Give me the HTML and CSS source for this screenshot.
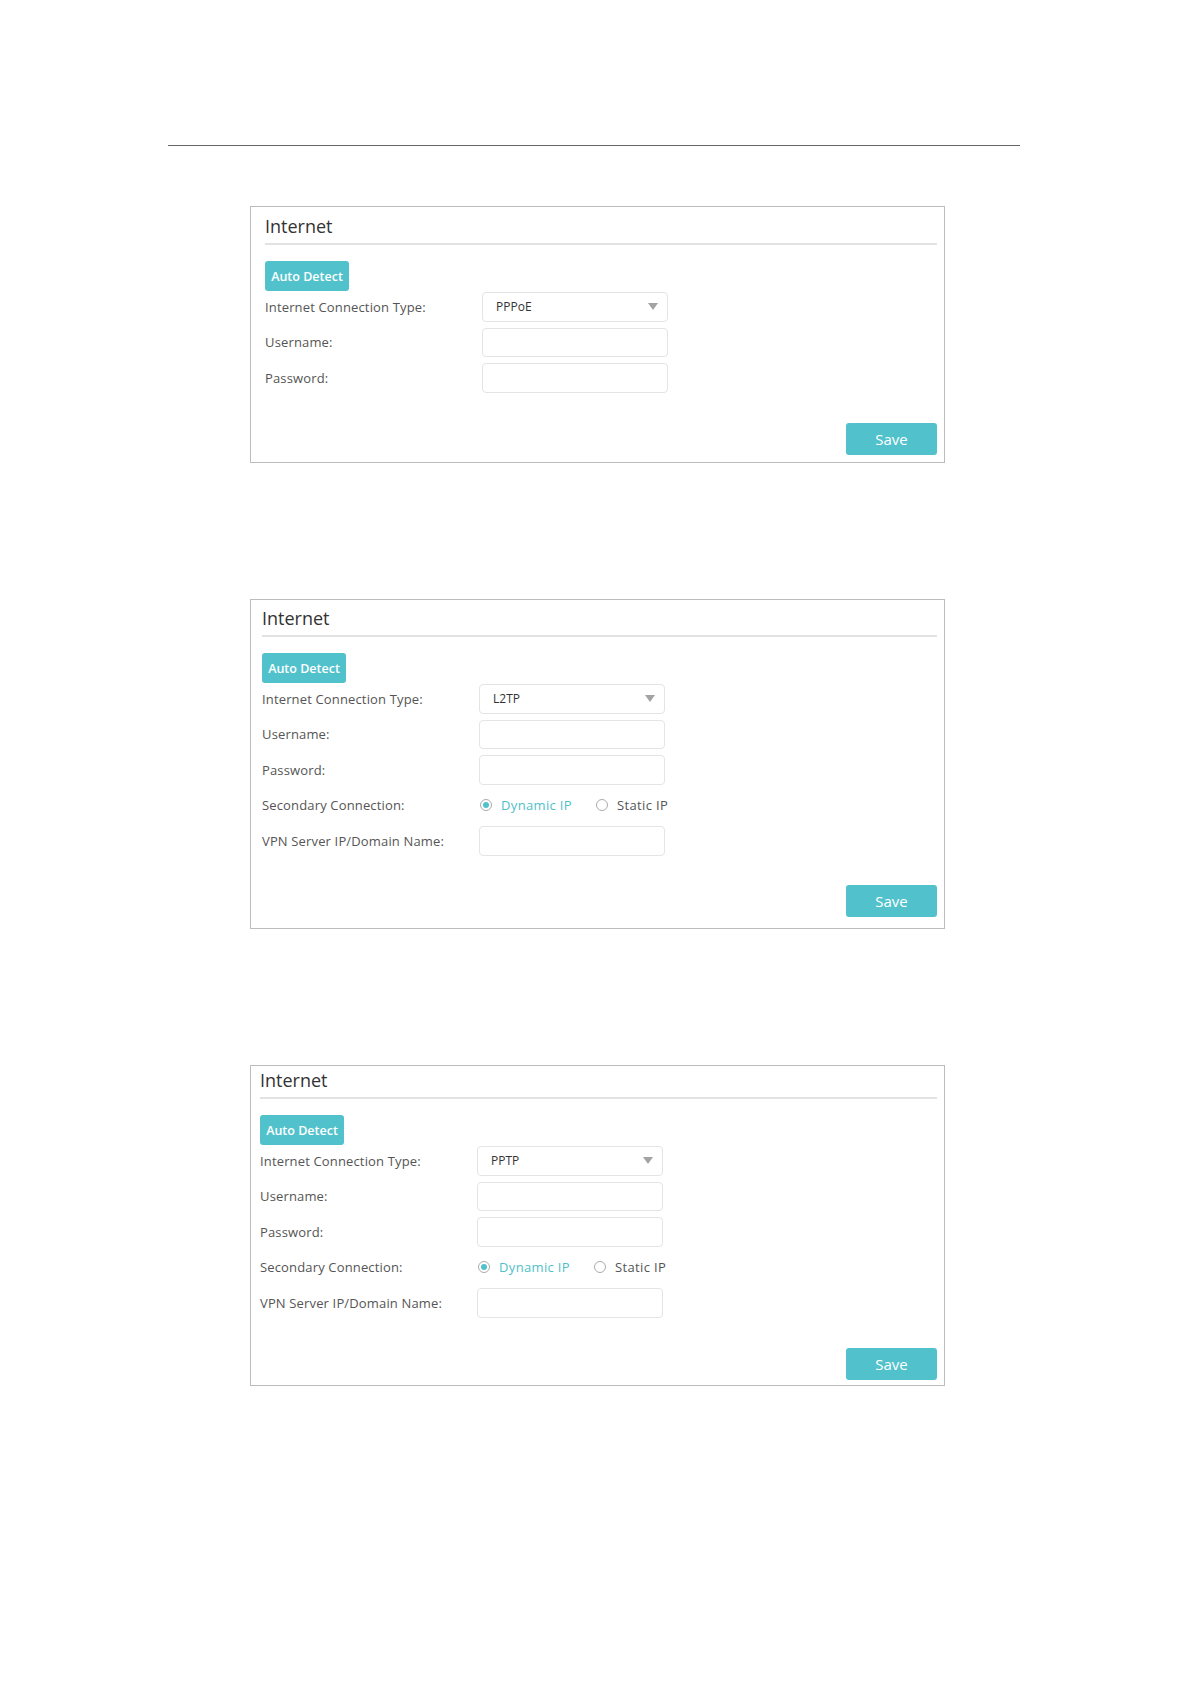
FILE: index.html
```html
<!DOCTYPE html>
<html>
  <head>
    <meta charset="utf-8">
    <title>Internet settings</title>
    <link rel="stylesheet" href="styles.css">
  </head>
  <body>
    <hr class="rule">

    <!-- PPPoE -->
    <section class="card card-pppoe">
      <h2 class="card-title">Internet</h2>
      <button type="button" class="btn-detect">Auto Detect</button>
      <div class="row">
        <span class="row-label">Internet Connection Type:</span>
        <div class="select">
          <span>PPPoE</span>
          <svg class="select-arrow" width="10" height="7" viewBox="0 0 10 7"><path d="M0 0H10L5 7Z" fill="#a3a3a3"/></svg>
        </div>
      </div>
      <div class="row">
        <span class="row-label">Username:</span>
        <input class="field" type="text">
      </div>
      <div class="row">
        <span class="row-label">Password:</span>
        <input class="field" type="password">
      </div>
      <div class="actions">
        <button type="button" class="btn-save">Save</button>
      </div>
    </section>

    <!-- L2TP -->
    <section class="card card-l2tp">
      <h2 class="card-title">Internet</h2>
      <button type="button" class="btn-detect">Auto Detect</button>
      <div class="row">
        <span class="row-label">Internet Connection Type:</span>
        <div class="select">
          <span>L2TP</span>
          <svg class="select-arrow" width="10" height="7" viewBox="0 0 10 7"><path d="M0 0H10L5 7Z" fill="#a3a3a3"/></svg>
        </div>
      </div>
      <div class="row">
        <span class="row-label">Username:</span>
        <input class="field" type="text">
      </div>
      <div class="row">
        <span class="row-label">Password:</span>
        <input class="field" type="password">
      </div>
      <div class="row">
        <span class="row-label">Secondary Connection:</span>
        <div class="radios">
          <label class="radio is-checked"><span class="radio-mark"></span>Dynamic IP</label>
          <label class="radio"><span class="radio-mark"></span>Static IP</label>
        </div>
      </div>
      <div class="row">
        <span class="row-label">VPN Server IP/Domain Name:</span>
        <input class="field" type="text">
      </div>
      <div class="actions">
        <button type="button" class="btn-save">Save</button>
      </div>
    </section>

    <!-- PPTP -->
    <section class="card card-pptp">
      <h2 class="card-title">Internet</h2>
      <button type="button" class="btn-detect">Auto Detect</button>
      <div class="row">
        <span class="row-label">Internet Connection Type:</span>
        <div class="select">
          <span>PPTP</span>
          <svg class="select-arrow" width="10" height="7" viewBox="0 0 10 7"><path d="M0 0H10L5 7Z" fill="#a3a3a3"/></svg>
        </div>
      </div>
      <div class="row">
        <span class="row-label">Username:</span>
        <input class="field" type="text">
      </div>
      <div class="row">
        <span class="row-label">Password:</span>
        <input class="field" type="password">
      </div>
      <div class="row">
        <span class="row-label">Secondary Connection:</span>
        <div class="radios">
          <label class="radio is-checked"><span class="radio-mark"></span>Dynamic IP</label>
          <label class="radio"><span class="radio-mark"></span>Static IP</label>
        </div>
      </div>
      <div class="row">
        <span class="row-label">VPN Server IP/Domain Name:</span>
        <input class="field" type="text">
      </div>
      <div class="actions">
        <button type="button" class="btn-save">Save</button>
      </div>
    </section>
  </body>
</html>
```

FILE: styles.css
```css
* {
  margin: 0;
  padding: 0;
  box-sizing: border-box;
}
body {
  font-family: "Open Sans", "Liberation Sans", sans-serif;
  font-size: 13px;
  color: #555;
  background: #fff;
  padding-bottom: 296px;
}
.rule {
  border: 0;
  border-top: 1px solid #666;
  margin: 145px 170px 0 168px;
}
.card {
  width: 695px;
  margin-left: 250px;
  border: 1px solid #bcbcbc;
  padding-right: 7px;
}
.card-pppoe {
  margin-top: 60px;
  padding: 7px 7px 7.5px 14px;
}
.card-l2tp {
  margin-top: 136px;
  padding: 6px 7px 11px 11px;
}
.card-pptp {
  margin-top: 136px;
  padding: 2px 7px 5.5px 9px;
}
.card-title {
  font-size: 18px;
  font-weight: normal;
  line-height: 24px;
  color: #333;
  padding-bottom: 5px;
  border-bottom: 2px solid #e2e2e2;
}
.btn-detect {
  display: block;
  margin-top: 16px;
  width: 84px;
  height: 30px;
  border: 0;
  border-radius: 3px;
  background: #51c2cc;
  color: #fff;
  font-family: inherit;
  font-size: 12.5px;
  font-weight: 600;
}
.row {
  display: flex;
  align-items: center;
  height: 29.5px;
  margin-top: 6px;
}
.btn-detect + .row {
  margin-top: 1px;
}
.row-label {
  width: 217px;
  flex: none;
  letter-spacing: 0.15px;
}
.select, .field {
  width: 186px;
  height: 29.5px;
  border: 1px solid #e4e4e4;
  border-radius: 4px;
  background: #fff;
}
.select {
  display: flex;
  align-items: center;
  justify-content: space-between;
  padding: 0 9px 0 13px;
  font-size: 12px;
  color: #333;
}
.field {
  font-family: inherit;
  font-size: 12px;
  padding: 0 8px;
  outline: none;
}
.radios {
  display: flex;
  align-items: center;
  gap: 23px;
}
.radio {
  display: flex;
  align-items: center;
  gap: 9px;
  color: #555;
  letter-spacing: 0.35px;
}
.radio.is-checked {
  color: #4fbfc9;
}
.radio-mark {
  width: 12px;
  height: 12px;
  margin-left: 1px;
  border: 1px solid #ababab;
  border-radius: 50%;
  display: flex;
  align-items: center;
  justify-content: center;
}
.radio.is-checked .radio-mark::after {
  content: "";
  width: 6px;
  height: 6px;
  border-radius: 50%;
  background: #51c2cc;
}
.actions {
  display: flex;
  justify-content: flex-end;
  margin-top: 30px;
}
.card-l2tp .actions {
  margin-top: 29.5px;
}
.btn-save {
  width: 91px;
  height: 32px;
  border: 0;
  border-radius: 3px;
  background: #51c2cc;
  color: #fff;
  font-family: inherit;
  font-size: 15px;
}
```
